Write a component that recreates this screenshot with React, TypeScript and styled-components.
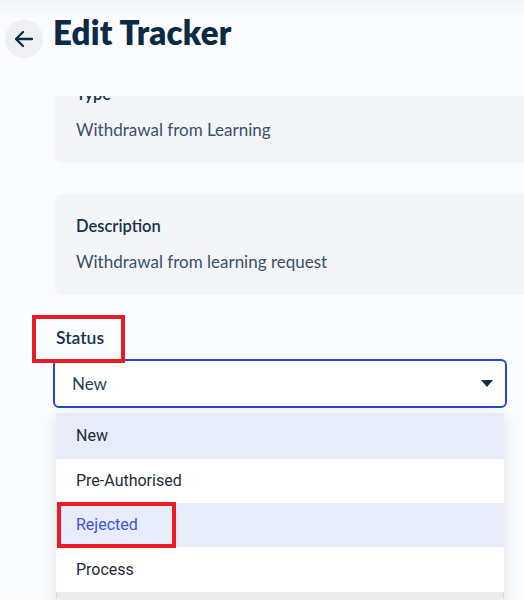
import styled, { createGlobalStyle } from "styled-components";

const GlobalStyle = createGlobalStyle`
  * {
    box-sizing: border-box;
  }
  html,
  body {
    margin: 0;
    padding: 0;
    background: #ffffff;
  }
  body {
    font-family: "Lato", "Liberation Sans", sans-serif;
    color: #1b3450;
    overflow: hidden;
  }
`;

const Screen = styled.div`
  width: 524px;
  height: 600px;
  overflow: hidden;
  background: #fafbfd;
  display: flex;
  flex-direction: column;
`;

const Header = styled.header`
  flex: 0 0 96px;
  display: flex;
  align-items: flex-start;
  gap: 10px;
  padding: 20px 0 0 5px;
  background: linear-gradient(#f3f4f7, #fafbfd 18px);
  position: relative;
  z-index: 2;
`;

const BackButton = styled.button`
  width: 38px;
  height: 38px;
  border-radius: 50%;
  border: none;
  padding: 0;
  background: #eff0f4;
  display: flex;
  align-items: center;
  justify-content: center;
  color: #0f2d47;
  cursor: pointer;
`;

const Title = styled.h1`
  margin: -4px 0 0;
  font-size: 33px;
  line-height: 33px;
  font-weight: 800;
  color: #0b2a45;
  letter-spacing: 0.2px;
`;

const Body = styled.main`
  flex: 1;
  overflow: hidden;
  position: relative;
`;

const Scroller = styled.div<{ $offset: number }>`
  margin-top: ${(p) => -p.$offset}px;
  padding-left: 55px;
  display: flex;
  flex-direction: column;
  gap: 31px;
`;

const InfoCard = styled.section`
  width: 500px;
  height: 101px;
  border-radius: 7px;
  background: #f4f5f8;
  padding: 22px 21px;
  display: flex;
  flex-direction: column;
  gap: 16px;
`;

const InfoLabel = styled.span`
  font-size: 16.5px;
  line-height: 20px;
  font-weight: 600;
  color: #17314d;
`;

const InfoValue = styled.span`
  font-size: 17px;
  line-height: 20px;
  font-weight: 400;
  color: #3a5069;
`;

const Field = styled.div`
  margin-top: 2px;
  width: 454px;
  margin-left: -2px;
  display: flex;
  flex-direction: column;
`;

const FieldLabel = styled.label`
  align-self: flex-start;
  margin: 0 0 11px 3px;
  font-size: 17.5px;
  line-height: 20px;
  font-weight: 600;
  color: #17314d;
`;

const Marked = styled.span<{ $l: number; $t: number; $r: number; $b: number }>`
  position: relative;
  display: inline-block;
  &::after {
    content: "";
    position: absolute;
    left: ${(p) => -p.$l}px;
    top: ${(p) => -p.$t}px;
    right: ${(p) => -p.$r}px;
    bottom: ${(p) => -p.$b}px;
    border: 4px solid #e81c25;
    pointer-events: none;
    z-index: 1;
  }
`;

const SelectBox = styled.div`
  flex: 0 0 49px;
  height: 49px;
  border: 2px solid #2547d8;
  border-radius: 6px;
  background: #ffffff;
  display: flex;
  align-items: center;
  justify-content: space-between;
  padding: 0 12px 0 17px;
  font-size: 17px;
  color: #273f58;
`;

const Caret = styled.span`
  width: 0;
  height: 0;
  border-left: 6px solid transparent;
  border-right: 6px solid transparent;
  border-top: 7px solid #13304b;
`;

const Menu = styled.ul`
  list-style: none;
  margin: 5px 0 0 3px;
  padding: 0;
  width: 448px;
  background: #ffffff;
  border-radius: 4px 4px 0 0;
  box-shadow: 0 4px 14px rgba(30, 40, 70, 0.12);
  font-family: "Roboto", "Liberation Sans", sans-serif;
`;

const MenuItem = styled.li<{ $active?: boolean; $selected?: boolean; $h: number }>`
  height: ${(p) => p.$h}px;
  display: flex;
  align-items: center;
  padding-left: 20px;
  font-size: 16px;
  line-height: 20px;
  color: ${(p) => (p.$active ? "#3a55d8" : "#1e2b3a")};
  background: ${(p) => (p.$active || p.$selected ? "#e8ecf8" : "#ffffff")};
`;

const MenuEdge = styled.li`
  height: 7px;
  background: #ebebed;
  border-left: 1px solid #d4d8e6;
  border-right: 1px solid #d4d8e6;
`;

function ArrowLeft() {
  return (
    <svg width="24" height="24" viewBox="0 0 24 24" fill="none" stroke="currentColor" strokeWidth="2.3" strokeLinecap="round" strokeLinejoin="round">
      <path d="M20 12H4.5" />
      <path d="M11 5l-7 7 7 7" />
    </svg>
  );
}

const statuses = [
  { label: "New", height: 46 },
  { label: "Pre-Authorised", height: 44 },
  { label: "Rejected", height: 44 },
  { label: "Process", height: 45 },
];

export default function App() {
  return (
    <>
      <GlobalStyle />
      <Screen>
        <Header>
          <BackButton aria-label="Back">
            <ArrowLeft />
          </BackButton>
          <Title>Edit Tracker</Title>
        </Header>
        <Body>
          <Scroller $offset={34}>
            <InfoCard>
              <InfoLabel>Type</InfoLabel>
              <InfoValue>Withdrawal from Learning</InfoValue>
            </InfoCard>
            <InfoCard>
              <InfoLabel>Description</InfoLabel>
              <InfoValue>Withdrawal from learning request</InfoValue>
            </InfoCard>
            <Field>
              <FieldLabel>
                <Marked $l={24} $t={13} $r={21} $b={15}>Status</Marked>
              </FieldLabel>
              <SelectBox>
                <span>New</span>
                <Caret />
              </SelectBox>
              <Menu>
                {statuses.map((s, i) => (
                  <MenuItem
                    key={s.label}
                    $h={s.height}
                    $selected={i === 0}
                    $active={s.label === "Rejected"}
                  >
                    {s.label === "Rejected" ? (
                      <Marked $l={19} $t={13} $r={38} $b={13}>{s.label}</Marked>
                    ) : (
                      s.label
                    )}
                  </MenuItem>
                ))}
                <MenuEdge />
              </Menu>
            </Field>
          </Scroller>
        </Body>
      </Screen>
    </>
  );
}
